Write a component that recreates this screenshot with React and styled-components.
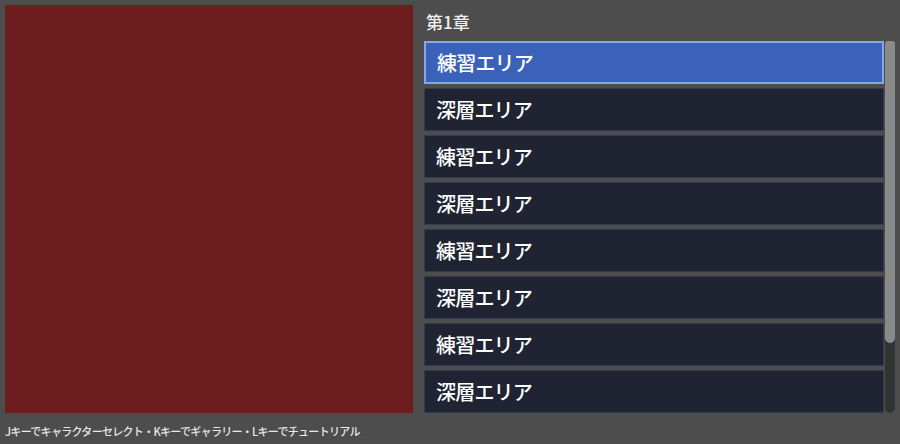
import styled, { createGlobalStyle } from "styled-components";

const areas = ["練習エリア", "深層エリア", "練習エリア", "深層エリア", "練習エリア", "深層エリア", "練習エリア", "深層エリア"];

const GlobalStyle = createGlobalStyle`
    html, body {
        margin: 0;
        padding: 0;
        background: #4d4d4d;
        font-family: "Noto Sans CJK JP", "Noto Sans", sans-serif;
        overflow: hidden;
    }
`

const App = () => {
    return (
        <StyledScreen>
            <GlobalStyle />
            <StyledMain>
                <StyledPreview />
                <StyledSide>
                    <StyledChapter>第1章</StyledChapter>
                    <StyledListWrap>
                        <StyledList>
                            {areas.map((name, i) => (
                                <StyledItem key={i} selected={i === 0}>{name}</StyledItem>
                            ))}
                        </StyledList>
                        <StyledTrack>
                            <StyledThumb />
                        </StyledTrack>
                    </StyledListWrap>
                </StyledSide>
            </StyledMain>
            <StyledHint>Jキーでキャラクターセレクト・Kキーでギャラリー・Lキーでチュートリアル</StyledHint>
        </StyledScreen>
    );
}

const StyledScreen = styled.div`
    width: 900px;
    height: 444px;
    box-sizing: border-box;
    padding: 5px 5px 0 5px;
    display: flex;
    flex-direction: column;
`
const StyledMain = styled.div`
    display: flex;
    gap: 11px;
    height: 408px;
`
const StyledPreview = styled.div`
    width: 408px;
    height: 408px;
    background: #6e1d1f;
    flex-shrink: 0;
`
const StyledSide = styled.div`
    flex: 1;
    display: flex;
    flex-direction: column;
`
const StyledChapter = styled.div`
    height: 36px;
    display: flex;
    align-items: center;
    padding-left: 2px;
    padding-bottom: 4px;
    box-sizing: border-box;
    color: #f0f0f0;
    font-size: 17px;
    font-weight: 500;
`
const StyledListWrap = styled.div`
    display: flex;
    flex: 1;
    min-height: 0;
`
const StyledList = styled.div`
    width: 460px;
    display: flex;
    flex-direction: column;
    gap: 4px;
    overflow: hidden;
`
const StyledItem = styled.div`
    height: 43px;
    flex-shrink: 0;
    box-sizing: border-box;
    display: flex;
    align-items: center;
    padding-left: 11px;
    font-size: 20px;
    font-weight: 500;
    letter-spacing: -0.8px;
    color: #ffffff;
    background: ${p => p.selected ? "#3a62b9" : "#1f2332"};
    border: ${p => p.selected ? "2px solid #86a6e6" : "1px solid #323b52"};
`
const StyledTrack = styled.div`
    width: 10px;
    margin-left: 1px;
    background: #333333;
    border-radius: 0 0 5px 5px;
    height: 372px;
`
const StyledThumb = styled.div`
    height: 302px;
    background: #8a8a8a;
    border-radius: 2px 2px 5px 5px;
`
const StyledHint = styled.div`
    margin-top: 10px;
    color: #e8e8e8;
    font-size: 11px;
    font-weight: 500;
    letter-spacing: -0.7px;
    white-space: nowrap;
`

export default App;
